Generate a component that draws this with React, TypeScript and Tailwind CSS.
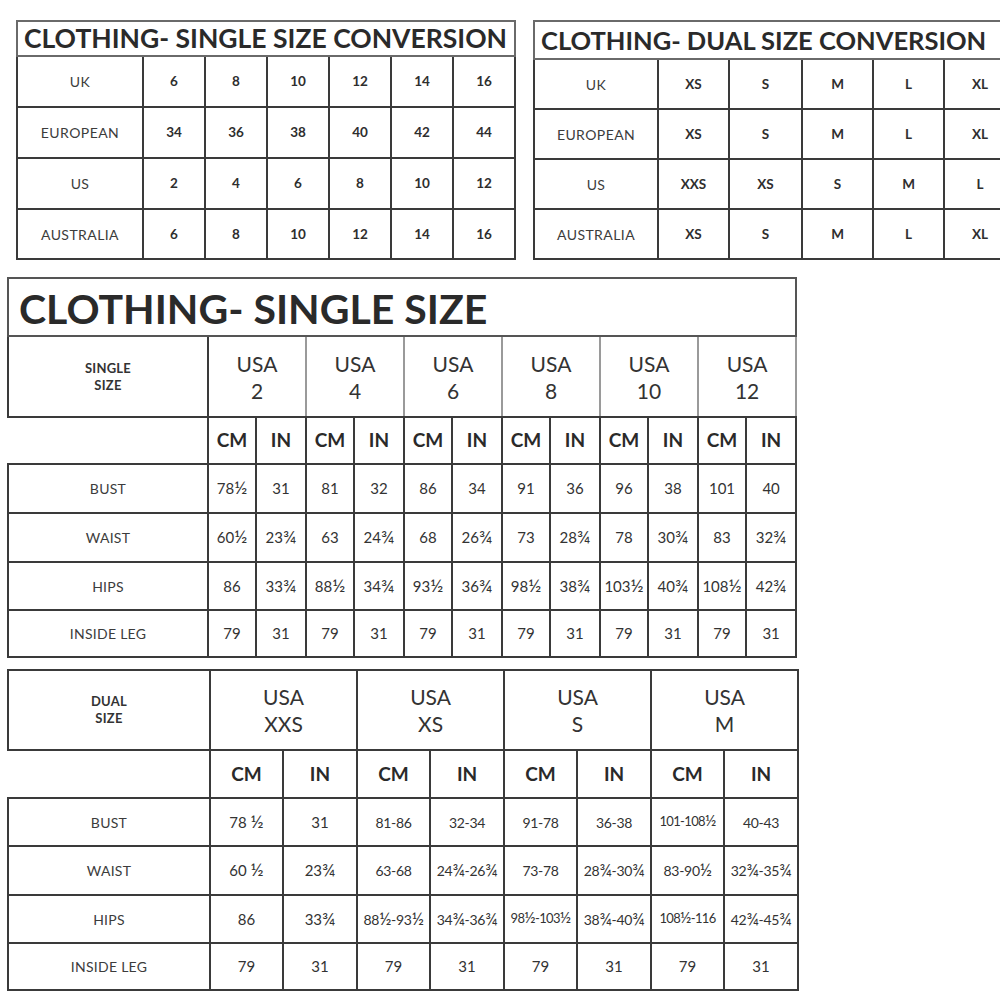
import React from 'react';

const cell = 'border-2 border-[#3a3a3a] p-0 text-center align-middle whitespace-nowrap';

// fraction glyphs are a little small in Lato, so bump them up
const Val: React.FC<{ v: string }> = ({ v }) => (
  <>
    {v.split(/([½¾])/).map((part, i) =>
      part === '½' || part === '¾' ? (
        <span key={i} className="text-[1.2em] leading-none">
          {part}
        </span>
      ) : (
        <React.Fragment key={i}>{part}</React.Fragment>
      )
    )}
  </>
);

interface ConvProps {
  title: string;
  titleClass: string;
  tableClass: string;
  cols: string[];
  rows: { h: string; cells: string[] }[];
}

const ConversionTable: React.FC<ConvProps> = ({ title, titleClass, tableClass, cols, rows }) => (
  <table className={`table-fixed border-collapse shrink-0 ${tableClass}`}>
    <colgroup>
      {cols.map((w, i) => (
        <col key={i} className={w} />
      ))}
    </colgroup>
    <tbody>
      <tr className={titleClass.split(' ')[0]}>
        <td
          colSpan={cols.length}
          className={`border-2 border-[#6a6a6a] p-0 pl-[6px] text-left align-middle whitespace-nowrap font-bold leading-none text-[#2a2a2a] ${titleClass}`}
        >
          {title}
        </td>
      </tr>
      {rows.map((r, i) => (
        <tr key={i} className={r.h}>
          {r.cells.map((v, j) => (
            <td
              key={j}
              className={`${cell} ${j === 0 ? 'text-[14px] tracking-[0.03em] text-[#3c3c3c]' : 'text-[13.5px] font-bold text-[#2e2e2e]'}`}
            >
              {v}
            </td>
          ))}
        </tr>
      ))}
    </tbody>
  </table>
);

interface SizeProps {
  title?: string;
  label: [string, string];
  sizes: string[];
  tableClass: string;
  firstCol: string;
  cmCol: string;
  inCol: string;
  headH: string;
  unitH: string;
  rows: { name: string; h: string; values: string[] }[];
  dual?: boolean;
}

const SizeTable: React.FC<SizeProps> = ({ title, label, sizes, tableClass, firstCol, cmCol, inCol, headH, unitH, rows, dual }) => (
  <table className={`table-fixed border-collapse ${tableClass}`}>
    <colgroup>
      <col className={firstCol} />
      {sizes.map((s) => (
        <React.Fragment key={s}>
          <col className={cmCol} />
          <col className={inCol} />
        </React.Fragment>
      ))}
    </colgroup>
    <tbody>
      {title && (
        <tr className="h-[58px]">
          <td
            colSpan={1 + sizes.length * 2}
            className="border-2 border-[#555] p-0 pl-[10px] pt-[2px] text-left align-middle whitespace-nowrap text-[41px] font-bold leading-none text-[#2a2a2a]"
          >
            {title}
          </td>
        </tr>
      )}
      <tr className={headH}>
        <td className={`${cell} text-[13px] font-bold leading-[17px] tracking-[0.02em] text-[#333]`}>
          {label[0]}
          <br />
          {label[1]}
        </td>
        {sizes.map((s) => (
          <td
            key={s}
            colSpan={2}
            className={`border-2 border-[#3a3a3a] ${dual ? '' : 'border-x-[#9a9a9a]'} p-0 text-center align-middle text-[21px] leading-[27px] text-[#333]`}
          >
            USA
            <br />
            {s}
          </td>
        ))}
      </tr>
      <tr className={unitH}>
        <td className="p-0" />
        {sizes.map((s) => (
          <React.Fragment key={s}>
            <td className={`${cell} text-[19px] font-bold text-[#2a2a2a]`}>CM</td>
            <td className={`${cell} text-[19px] font-bold text-[#2a2a2a]`}>IN</td>
          </React.Fragment>
        ))}
      </tr>
      {rows.map((r) => (
        <tr key={r.name} className={r.h}>
          <td className={`${cell} text-[14px] tracking-[0.02em] text-[#3c3c3c]`}>{r.name}</td>
          {r.values.map((v, j) => (
            <td
              key={j}
              className={`${cell} ${
                v.length > 7 ? 'text-[13px] tracking-[-0.05em]' : v.length > 4 ? 'text-[14px] tracking-[-0.02em]' : 'text-[15px]'
              } text-[#333]`}
            >
              <Val v={v} />
            </td>
          ))}
        </tr>
      ))}
    </tbody>
  </table>
);

export default function App() {
  return (
    <div className="w-[1000px] h-[1000px] overflow-hidden bg-white pt-[20px] font-['Lato','Open_Sans',sans-serif]">
      <div className="flex items-start gap-[17px] pl-[16px]">
        <ConversionTable
          title="CLOTHING- SINGLE SIZE CONVERSION"
          titleClass="h-[35px] text-[26.5px]"
          tableClass="w-[498px]"
          cols={['w-[126px]', 'w-[62px]', 'w-[62px]', 'w-[62px]', 'w-[62px]', 'w-[62px]', 'w-[62px]']}
          rows={[
            { h: 'h-[51px]', cells: ['UK', '6', '8', '10', '12', '14', '16'] },
            { h: 'h-[51px]', cells: ['EUROPEAN', '34', '36', '38', '40', '42', '44'] },
            { h: 'h-[51px]', cells: ['US', '2', '4', '6', '8', '10', '12'] },
            { h: 'h-[50px]', cells: ['AUSTRALIA', '6', '8', '10', '12', '14', '16'] },
          ]}
        />
        <ConversionTable
          title="CLOTHING- DUAL SIZE CONVERSION"
          titleClass="h-[38px] text-[25.5px] pt-[2px]"
          tableClass="w-[482px]"
          cols={['w-[124px]', 'w-[71px]', 'w-[73px]', 'w-[71px]', 'w-[71px]', 'w-[72px]']}
          rows={[
            { h: 'h-[50px]', cells: ['UK', 'XS', 'S', 'M', 'L', 'XL'] },
            { h: 'h-[50px]', cells: ['EUROPEAN', 'XS', 'S', 'M', 'L', 'XL'] },
            { h: 'h-[50px]', cells: ['US', 'XXS', 'XS', 'S', 'M', 'L'] },
            { h: 'h-[50px]', cells: ['AUSTRALIA', 'XS', 'S', 'M', 'L', 'XL'] },
          ]}
        />
      </div>

      <div className="mt-[17px] pl-[7px]">
        <SizeTable
          title="CLOTHING- SINGLE SIZE"
          label={['SINGLE', 'SIZE']}
          sizes={['2', '4', '6', '8', '10', '12']}
          tableClass="w-[788px]"
          firstCol="w-[200px]"
          cmCol="w-[48px]"
          inCol="w-[50px]"
          headH="h-[81px]"
          unitH="h-[47px]"
          rows={[
            { name: 'BUST', h: 'h-[49px]', values: ['78½', '31', '81', '32', '86', '34', '91', '36', '96', '38', '101', '40'] },
            { name: 'WAIST', h: 'h-[49px]', values: ['60½', '23¾', '63', '24¾', '68', '26¾', '73', '28¾', '78', '30¾', '83', '32¾'] },
            { name: 'HIPS', h: 'h-[48px]', values: ['86', '33¾', '88½', '34¾', '93½', '36¾', '98½', '38¾', '103½', '40¾', '108½', '42¾'] },
            { name: 'INSIDE LEG', h: 'h-[47px]', values: ['79', '31', '79', '31', '79', '31', '79', '31', '79', '31', '79', '31'] },
          ]}
        />
      </div>

      <div className="mt-[11px] pl-[7px]">
        <SizeTable
          label={['DUAL', 'SIZE']}
          sizes={['XXS', 'XS', 'S', 'M']}
          tableClass="w-[790px]"
          firstCol="w-[202px]"
          cmCol="w-[73px]"
          inCol="w-[74px]"
          headH="h-[80px]"
          unitH="h-[48px]"
          dual
          rows={[
            { name: 'BUST', h: 'h-[48px]', values: ['78 ½', '31', '81-86', '32-34', '91-78', '36-38', '101-108½', '40-43'] },
            { name: 'WAIST', h: 'h-[49px]', values: ['60 ½', '23¾', '63-68', '24¾-26¾', '73-78', '28¾-30¾', '83-90½', '32¾-35¾'] },
            { name: 'HIPS', h: 'h-[48px]', values: ['86', '33¾', '88½-93½', '34¾-36¾', '98½-103½', '38¾-40¾', '108½-116', '42¾-45¾'] },
            { name: 'INSIDE LEG', h: 'h-[47px]', values: ['79', '31', '79', '31', '79', '31', '79', '31'] },
          ]}
        />
      </div>
    </div>
  );
}
